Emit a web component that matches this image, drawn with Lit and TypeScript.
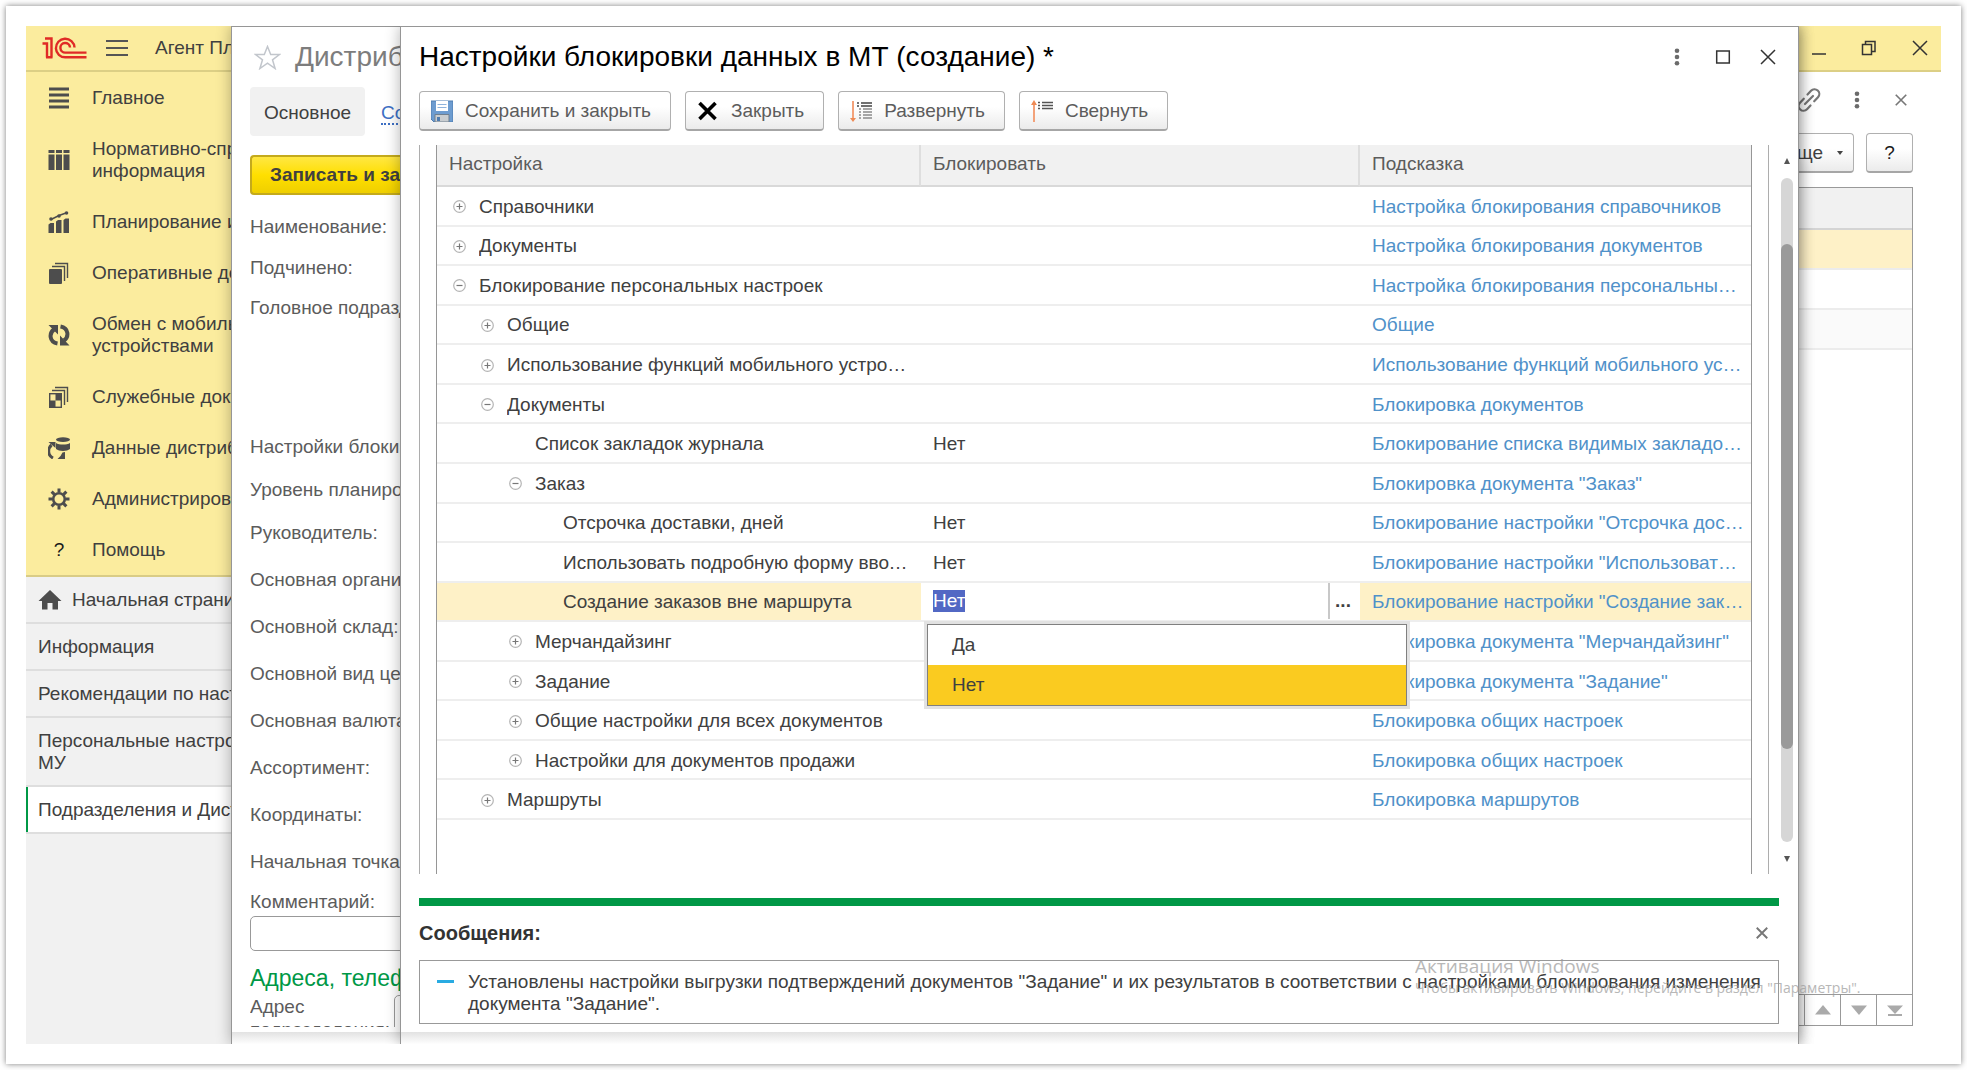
import { LitElement, html, css, svg, nothing } from "lit";
import { customElement, state, query } from "lit/decorators.js";
import { classMap } from "lit/directives/class-map.js";

const dark = "#4d4d4d";

const sectionIcons: Record<string, unknown> = {
  main: svg`<path d="M1 2h20M1 8h20M1 14h20M1 20h20" stroke=${dark} stroke-width="3"/>`,
  tables: svg`<path d="M0.5 1h6v3h-6zM8 1h6v3H8zM15.500 1h6v3h-6zM0.500 5.500h6V21h-6zM8 5.500h6V21H8zM15.500 5.500h6V21h-6z" fill=${dark}/>`,
  chart: svg`<path d="M0.500 13.500l2-1.500h3.500v10h-5.500zM8 10.500l2-1.500h3.500v13H8zM15.500 9l2-1.500H21v14.500h-5.500z" fill=${dark}/><path d="M3 8.500l8-4L18 2" stroke=${dark} stroke-width="1.500" fill="none"/><circle cx="3" cy="8" r="1.800" fill=${dark}/><circle cx="11" cy="5" r="1.800" fill=${dark}/><circle cx="18.500" cy="2" r="1.800" fill=${dark}/>`,
  docs: svg`<rect x="1" y="7" width="13" height="15" rx="1" fill=${dark}/><path d="M4 4.500h12.500V19M7 1.500h12.500V16" stroke=${dark} stroke-width="1.400" fill="none"/>`,
  sync: svg`<path d="M9.500 19.500C1 18 1 9 6 5.500M12.500 2.500C21 4 21 13 16 16.500" stroke=${dark} stroke-width="4" fill="none"/><path d="M0.500 1H10v9.500zM21.500 21.500H12V11.500z" fill=${dark}/>`,
  service: svg`<rect x="1.700" y="7.700" width="11.600" height="13.600" fill="none" stroke=${dark} stroke-width="1.400"/><path d="M7.500 7.500h6v7h-6zM1.500 14.500h6v7h-6z" fill=${dark}/><path d="M4 4.500h12.500V19M7 1.500h12.500V16" stroke=${dark} stroke-width="1.400" fill="none"/>`,
  data: svg`<ellipse cx="15" cy="2.600" rx="7" ry="2.400" fill=${dark}/><path d="M8 6c3 2 11 2 14 0V12c-3 2.500-11 2.500-14 0z" fill=${dark}/><path d="M5 21C-1 18 0 11 3.500 8" stroke=${dark} stroke-width="3" fill="none"/><path d="M0.500 5H7.500v6zM17 15v7h-7.500l3-3 2-3.500z" fill=${dark}/>`,
  gear: svg`<circle cx="11" cy="11" r="5.800" fill="none" stroke=${dark} stroke-width="2.600"/><path d="M11 0.500v4M11 17.500v4M0.500 11h4M17.500 11h4M3.600 3.600l2.800 2.800M15.600 15.600l2.800 2.800M18.400 3.600l-2.800 2.800M6.400 15.600l-2.800 2.800" stroke=${dark} stroke-width="3"/>`,
};

const sections: { icon: string; lines: string[] }[] = [
  { icon: "main", lines: ["Главное"] },
  { icon: "tables", lines: ["Нормативно-спр", "информация"] },
  { icon: "chart", lines: ["Планирование и"] },
  { icon: "docs", lines: ["Оперативные до"] },
  { icon: "sync", lines: ["Обмен с мобиль", "устройствами"] },
  { icon: "service", lines: ["Служебные доку"] },
  { icon: "data", lines: ["Данные дистриб"] },
  { icon: "gear", lines: ["Администрирова"] },
  { icon: "help", lines: ["Помощь"] },
];

const pages: { lines: string[]; home?: boolean; active?: boolean }[] = [
  { lines: ["Начальная страни"], home: true },
  { lines: ["Информация"] },
  { lines: ["Рекомендации по наст"] },
  { lines: ["Персональные настро", "МУ"] },
  { lines: ["Подразделения и Дист"], active: true },
];

interface Setting {
  name: string;
  level: number;
  open?: boolean;
  value?: string;
  hint: string;
  current?: boolean;
}

const settings: Setting[] = [
  { name: "Справочники", level: 0, open: false, hint: "Настройка блокирования справочников" },
  { name: "Документы", level: 0, open: false, hint: "Настройка блокирования документов" },
  { name: "Блокирование персональных настроек", level: 0, open: true, hint: "Настройка блокирования персональных настроек" },
  { name: "Общие", level: 1, open: false, hint: "Общие" },
  { name: "Использование функций мобильного устройства", level: 1, open: false, hint: "Использование функций мобильного устройства" },
  { name: "Документы", level: 1, open: true, hint: "Блокировка документов" },
  { name: "Список закладок журнала", level: 2, value: "Нет", hint: "Блокирование списка видимых закладок журнала" },
  { name: "Заказ", level: 2, open: true, hint: 'Блокировка документа "Заказ"' },
  { name: "Отсрочка доставки, дней", level: 3, value: "Нет", hint: 'Блокирование настройки "Отсрочка доставки, дней"' },
  { name: "Использовать подробную форму ввода заказа", level: 3, value: "Нет", hint: 'Блокирование настройки "Использовать подробную форму ввода заказа"' },
  { name: "Создание заказов вне маршрута", level: 3, value: "Нет", hint: 'Блокирование настройки "Создание заказов вне маршрута"', current: true },
  { name: "Мерчандайзинг", level: 2, open: false, hint: 'Блокировка документа "Мерчандайзинг"' },
  { name: "Задание", level: 2, open: false, hint: 'Блокировка документа "Задание"' },
  { name: "Общие настройки для всех документов", level: 2, open: false, hint: "Блокировка общих настроек" },
  { name: "Настройки для документов продажи", level: 2, open: false, hint: "Блокировка общих настроек" },
  { name: "Маршруты", level: 1, open: false, hint: "Блокировка маршрутов" },
];

const dots = html`<svg width="18" height="18" viewBox="0 0 18 18" aria-hidden="true"><g fill="#6b6b6b"><circle cx="9" cy="2.800" r="2.300"/><circle cx="9" cy="9" r="2.300"/><circle cx="9" cy="15.200" r="2.300"/></g></svg>`;
const cross = (size: number, width: number, color: string) => html`<svg width=${size} height=${size} viewBox="0 0 16 16" aria-hidden="true"><path d="M1 1l14 14M15 1L1 15" stroke=${color} stroke-width=${width} fill="none"/></svg>`;

const base = css`
  * { box-sizing: border-box; }
  button, input { font: inherit; color: inherit; margin: 0; padding: 0; }
  button { background: none; border: 0; display: flex; align-items: center; justify-content: center; cursor: pointer; white-space: nowrap; }
  svg { display: block; flex: none; }
  h1, h2, p, ul { margin: 0; padding: 0; font-weight: 400; list-style: none; }
  a { color: inherit; text-decoration: none; }
  .push { height: 40px; border: 1px solid #b0b0b0; border-bottom: 2px solid #a6a6a6; border-radius: 4px; background: linear-gradient(#ffffff 40%, #ebebeb); }
`;

@customElement("section-nav")
export class SectionNav extends LitElement {
  static styles = [base, css`
    :host { display: block; overflow: hidden; white-space: nowrap; background: #f1f1f1; }
    .sections { background: #fbec9e; border-bottom: 2px solid #d9cc86; }
    .section { display: grid; grid-template-columns: 22px 1fr; column-gap: 22px; align-items: center; padding: 15px 0 14px 22px; line-height: 22px; }
    .help { text-align: center; color: #1a1a1a; }
    .page { display: flex; align-items: center; gap: 10px; padding: 12px 0 11px 12px; border-bottom: 2px solid #dedede; line-height: 22px; }
    .page.active { background: #fff; box-shadow: inset 2px 0 #009846; }
  `];

  render() {
    return html`
      <ul class="sections">
        ${sections.map((s) => html`<li><a class="section" href="#">
          ${s.icon === "help"
            ? html`<span class="help">?</span>`
            : html`<svg width="22" height="22" viewBox="0 0 22 22" aria-hidden="true">${sectionIcons[s.icon]}</svg>`}
          <span>${s.lines.map((l, i) => html`${i ? html`<br>` : nothing}${l}`)}</span>
        </a></li>`)}
      </ul>
      <ul>
        ${pages.map((p) => html`<li><a class=${classMap({ page: true, active: !!p.active })} href="#">
          ${p.home ? html`<svg width="24" height="20" viewBox="0 0 24 20" aria-hidden="true"><path d="M12 0L0.500 11H4v8.500h5.500V13h5v6.500H20V11h3.500z" fill="#4d4d4d"/></svg>` : nothing}
          <span>${p.lines.map((l, i) => html`${i ? html`<br>` : nothing}${l}`)}</span>
        </a></li>`)}
      </ul>`;
  }
}

@customElement("list-page")
export class ListPage extends LitElement {
  static styles = [base, css`
    :host { display: flex; flex-direction: column; align-items: stretch; background: #fff; padding: 16px 28px 18px 28px; }
    .tools { display: flex; justify-content: flex-end; align-items: center; gap: 27px; height: 24px; padding-right: 4px; }
    .tools .close { width: 16px; }
    .commands { display: flex; justify-content: flex-end; gap: 12px; padding: 21px 0 14px; }
    .more { gap: 14px; padding: 0 10px 0 24px; }
    .query { width: 47px; color: #1a1a1a; }
    .grid { flex: 1; border: 1px solid #999; border-bottom: 0; }
    .head { height: 42px; background: #f1f1f1; border-bottom: 2px solid #d4d4d4; }
    .row { height: 40px; border-bottom: 2px solid #ececec; }
    .row.current { background: #fef1c7; }
    .row.alt { background: #fafafa; }
    .pager { display: flex; justify-content: flex-end; border: 1px solid #999; }
    .pager button { width: 36px; height: 30px; border-left: 1px solid #999; }
  `];

  render() {
    return html`
      <div class="tools">
        <button aria-label="Ссылка"><svg width="24" height="24" viewBox="0 0 24 24" fill="none" stroke="#777" stroke-width="2.200" stroke-linecap="round"><path d="M8 16l8-8"/><path d="M10.500 6.500l3.500-3.700a4.600 4.600 0 0 1 7 6.500l-3.800 4"/><path d="M13.500 17.500L10 21.200a4.600 4.600 0 0 1-7-6.500l3.800-4"/></svg></button>
        <button aria-label="Меню">${dots}</button>
        <button class="close" aria-label="Закрыть страницу">${cross(12, 2.2, "#777")}</button>
      </div>
      <div class="commands">
        <button class="push more">Еще <svg width="6" height="4" viewBox="0 0 6 4"><path d="M0 0h6L3 4z" fill="#444"/></svg></button>
        <button class="push query">?</button>
      </div>
      <div class="grid">
        <div class="head"></div>
        <div class="row current"></div>
        <div class="row"></div>
        <div class="row alt"></div>
      </div>
      <div class="pager">
        <button aria-label="Вверх"><svg width="16" height="10" viewBox="0 0 16 10"><path d="M0 9.500L8 0l8 9.500z" fill="#aaa"/></svg></button>
        <button aria-label="Вниз"><svg width="16" height="10" viewBox="0 0 16 10"><path d="M0 0.500L8 10l8-9.500z" fill="#aaa"/></svg></button>
        <button aria-label="В конец"><svg width="16" height="11" viewBox="0 0 16 11"><path d="M0 0.500L8 9l8-8.500zM1 9h14v2H1z" fill="#aaa"/></svg></button>
      </div>`;
  }
}

@customElement("division-form")
export class DivisionForm extends LitElement {
  static styles = [base, css`
    :host { display: flex; flex-direction: column; overflow: hidden; white-space: nowrap; color: #5c5c5c; padding: 13px 0 0 18px; line-height: 22px; }
    :host > *, .fields > * { flex: none; }
    .title { display: flex; align-items: center; gap: 14px; padding-left: 4px; height: 34px; }
    h1 { font-size: 28px; line-height: 34px; color: #7d7d7d; }
    .tabs { display: flex; gap: 16px; margin: 13px 0 19px; color: #404040; }
    .tab { height: 49px; line-height: 51px; padding: 0 14px; border-radius: 4px; }
    .tab.on { background: #f1f1f1; }
    .tab.link { padding: 0; color: #3d6fc4; }
    .tab.link span { border-bottom: 2px dotted #3d6fc4; }
    .save { align-self: stretch; justify-content: flex-start; height: 40px; padding-left: 18px; font-weight: 700; color: #404040; border: 2px solid #c4aa1c; border-right: 0; border-radius: 4px 0 0 4px; background: linear-gradient(#ffe743, #ffdf00 50%, #efcf00); }
    .fields { display: flex; flex-direction: column; margin-top: 10px; }
    .f40 { height: 40px; line-height: 40px; }
    .f43 { height: 43px; line-height: 44px; }
    .f47 { height: 47px; line-height: 44px; }
    .gap { margin-bottom: 97px; }
    .note { padding-top: 4px; line-height: 22px; }
    .text { display: block; width: 200px; height: 35px; margin-top: 3px; border: 1px solid #999; border-radius: 5px; background: #fff; outline: 0; }
    h2 { font-size: 23px; line-height: 26px; color: #009846; margin-top: 14px; }
    .address { display: flex; justify-content: flex-start; margin-top: 4px; height: 32px; overflow: hidden; }
    .address label { width: 144px; line-height: 23px; flex: none; }
    .address input { flex: none; width: 60px; height: 60px; border: 1px solid #999; border-radius: 5px; outline: 0; }
  `];

  render() {
    return html`
      <div class="title">
        <svg width="27" height="25" viewBox="0 0 27 25" aria-hidden="true"><path d="M13.500 1.500l3.200 8h8.800l-7 5.300 2.600 8.700-7.600-5.300-7.600 5.300 2.600-8.700-7-5.300h8.800z" fill="#fff" stroke="#c2c6cc" stroke-width="1.500"/></svg>
        <h1>Дистриб</h1>
      </div>
      <div class="tabs"><a class="tab on" href="#">Основное</a><a class="tab link" href="#"><span>Со</span></a></div>
      <button class="save">Записать и за</button>
      <div class="fields">
        <span class="f43">Наименование:</span>
        <span class="f40">Подчинено:</span>
        <span class="f40 gap">Головное подразд</span>
        <span class="f43">Настройки блокир</span>
        <span class="f43">Уровень планиро</span>
        <span class="f47">Руководитель:</span>
        <span class="f47">Основная органи</span>
        <span class="f47">Основной склад:</span>
        <span class="f47">Основной вид цен</span>
        <span class="f47">Основная валюта</span>
        <span class="f47">Ассортимент:</span>
        <span class="f47">Координаты:</span>
        <span class="f47">Начальная точка</span>
        <label class="note" for="comment">Комментарий:</label>
        <input class="text" id="comment" type="text">
      </div>
      <h2>Адреса, телеф</h2>
      <div class="address"><label for="address">Адрес<br>подразделения:</label><input id="address" type="text"></div>`;
  }
}

@customElement("lock-settings")
export class LockSettings extends LitElement {
  static styles = [base, css`
    :host { display: flex; flex-direction: column; padding: 7px 19px 8px 18px; color: #404040; }
    .title { display: flex; align-items: center; justify-content: space-between; height: 34px; margin-top: 6px; padding-right: 3px; }
    h1 { font-size: 28px; line-height: 34px; color: #000; }
    .controls { display: flex; align-items: center; gap: 29px; }
    .tools { display: flex; gap: 14px; margin-top: 17px; color: #5c5c5c; }
    .tools button { padding: 0 19px 0 11px; gap: 12px; }
    .body { flex: 1; display: flex; margin: 14px -14px 0 0; min-height: 728px; }
    .group { flex: 1; min-width: 0; border: solid #adadad; border-width: 0 1px; padding: 0 16px; display: flex; flex-direction: column; }
    .frame { flex: 1; border: solid #969696; border-width: 0 1px; }
    table { width: 100%; height: 675px; table-layout: fixed; border-collapse: separate; border-spacing: 0; }
    .c1 { width: 484px; }
    .c2 { width: 439px; }
    th { height: 42px; background: #f1f1f1; border-bottom: 2px solid #d9d9d9; border-right: 2px solid #dedede; text-align: left; font-weight: 400; padding: 0 0 2px 12px; color: #5c5c5c; }
    th:last-child { border-right: 0; }
    td { height: 39px; padding: 2px 8px 0 12px; border-bottom: 2px solid #eeeeee; line-height: 22px; white-space: nowrap; overflow: hidden; text-overflow: ellipsis; }
    .name { display: flex; align-items: center; gap: 13px; padding-left: 4px; }
    .name.l1 { padding-left: 32px; }
    .name.l2 { padding-left: 60px; }
    .name.l3 { padding-left: 88px; }
    .name .fold { width: 13px; height: 13px; flex: none; }
    .name span { overflow: hidden; text-overflow: ellipsis; }
    .hint { color: #5091c9; padding-right: 5px; }
    .current td { background: #fef1c7; }
    .current .edit { background: #fff; position: relative; overflow: visible; padding: 0; }
    .editor { display: flex; height: 36px; align-items: center; }
    .editor input { flex: 1; min-width: 0; height: 22px; padding-left: 12px; border: 0; outline: 0; background: none; }
    .editor input::selection { background: #5268c4; color: #fff; }
    .editor button { width: 32px; height: 36px; border-left: 2px solid #c8c8c8; padding-right: 4px; font-weight: 700; }
    .list { position: absolute; z-index: 2; top: 41px; left: 6px; width: 480px; background: #fff; border: 1px solid #808080; box-shadow: 0 0 0 3px #e2e2e2; }
    .list li { height: 40px; line-height: 40px; padding-left: 24px; }
    .list .picked { background: #facb20; }
    .scroll { width: 24px; display: flex; flex-direction: column; align-items: center; gap: 14px; padding: 13px 0 12px 12px; }
    .track { flex: 1; width: 12px; border-radius: 6px; background: #d6d6d6; padding-top: 66px; }
    .thumb { height: 505px; border-radius: 6px; background: #9a9a9a; }
    .bar { height: 8px; background: #009846; margin-top: 24px; }
    .caption { display: flex; justify-content: space-between; align-items: center; padding: 16px 11px 0 0; line-height: 22px; }
    .caption h2 { font-size: 20px; font-weight: 700; color: #333; }
    .message { display: flex; gap: 14px; border: 1px solid #999; margin-top: 16px; padding: 10px 8px 8px 17px; line-height: 22px; min-height: 63px; }
    .dash { flex: none; width: 17px; height: 3px; margin-top: 9px; background: #29abe2; }
  `];

  @state() private value = "Нет";
  @query(".editor input") private field!: HTMLInputElement;

  firstUpdated() {
    this.field.focus({ preventScroll: true });
    this.field.select();
  }

  private marker(open?: boolean) {
    if (open === undefined) return html`<i class="fold"></i>`;
    return html`<button class="fold" aria-label=${open ? "Свернуть" : "Развернуть"}><svg width="13" height="13" viewBox="0 0 13 13"><circle cx="6.500" cy="6.500" r="5.800" fill="#fff" stroke="#b5b5b5" stroke-width="1.200"/><path d=${open ? "M3.500 6.500h6" : "M3.500 6.500h6M6.500 3.500v6"} stroke="#777" stroke-width="1.200"/></svg></button>`;
  }

  private editor() {
    return html`<td class="edit">
      <div class="editor">
        <input type="text" aria-label="Блокировать" .value=${this.value}>
        <button aria-label="Выбрать">...</button>
      </div>
      <ul class="list" role="listbox">
        ${["Да", "Нет"].map((v) => html`<li role="option" aria-selected=${v === this.value} class=${classMap({ picked: v === this.value })} @click=${() => (this.value = v)}>${v}</li>`)}
      </ul>
    </td>`;
  }

  render() {
    return html`
      <div class="title">
        <h1>Настройки блокировки данных в МТ (создание) *</h1>
        <div class="controls">
          <button aria-label="Меню">${dots}</button>
          <button aria-label="Развернуть окно"><svg width="16" height="16" viewBox="0 0 16 16"><rect x="1.700" y="2" width="12.600" height="12" fill="none" stroke="#333" stroke-width="1.500"/></svg></button>
          <button aria-label="Закрыть окно">${cross(16, 1.5, "#333")}</button>
        </div>
      </div>
      <div class="tools">
        <button class="push"><svg width="22" height="22" viewBox="0 0 22 22"><path d="M0 1h22v21H3l-3-3z" fill="#6d9cd0"/><path d="M0 1h22v21H3l-3-3z" fill="none" stroke="#4f7cb0"/><path d="M5 1h12v10H5z" fill="#fff"/><path d="M6.500 4.500h9M6.500 7.500h9" stroke="#8fb3dc" stroke-width="1.200"/><path d="M4 14.500h14V22H4z" fill="#c9cdd0" stroke="#6f7f8f"/><path d="M6 17h3v4H6z" fill="#4f7cb0"/></svg>Сохранить и закрыть</button>
        <button class="push"><svg width="22" height="22" viewBox="0 0 22 22"><path d="M2.500 3l16 16M18.500 3l-16 16" stroke="#000" stroke-width="3.600"/></svg>Закрыть</button>
        <button class="push"><svg width="22" height="22" viewBox="0 0 22 22"><path d="M3 1v18" stroke="#f3a27a" stroke-width="2"/><path d="M0 18h6l-3 4z" fill="#ee8a55"/><path d="M7 3h2M11 3h11M7 6h2M11 6h11" stroke="#444" stroke-width="1.600"/><path d="M9 9h2M13 9h9M9 12h2M13 12h9M9 15h2M13 15h9M9 18h2M13 18h9" stroke="#8a8a8a" stroke-width="1.400"/></svg>Развернуть</button>
        <button class="push"><svg width="22" height="22" viewBox="0 0 22 22"><path d="M3 4v18" stroke="#f3a27a" stroke-width="2"/><path d="M0 5h6L3 0z" fill="#ee8a55"/><path d="M7 2.500h2M11 2.500h11M7 5.500h2M11 5.500h11M7 8.500h2M11 8.500h11" stroke="#555" stroke-width="1.600"/></svg>Свернуть</button>
      </div>
      <div class="body">
        <div class="group"><div class="frame">
          <table>
            <thead><tr><th class="c1">Настройка</th><th class="c2">Блокировать</th><th>Подсказка</th></tr></thead>
            <tbody>
              ${settings.map((s) => html`<tr class=${classMap({ current: !!s.current })}>
                <td><div class="name l${s.level}">${this.marker(s.open)}<span>${s.name}</span></div></td>
                ${s.current ? this.editor() : html`<td>${s.value ?? ""}</td>`}
                <td class="hint">${s.hint}</td>
              </tr>`)}
            </tbody>
          </table>
        </div></div>
        <div class="scroll">
          <svg width="6" height="6" viewBox="0 0 6 6"><path d="M0 6h6L3 0z" fill="#555"/></svg>
          <div class="track"><div class="thumb"></div></div>
          <svg width="6" height="6" viewBox="0 0 6 6"><path d="M0 0h6L3 6z" fill="#555"/></svg>
        </div>
      </div>
      <div class="bar"></div>
      <div class="caption"><h2>Сообщения:</h2><button aria-label="Закрыть сообщения">${cross(12, 2.5, "#777")}</button></div>
      <div class="message"><span class="dash"></span><p>Установлены настройки выгрузки подтверждений документов "Задание" и их результатов в соответствии с настройками блокирования изменения документа "Задание".</p></div>`;
  }
}

@customElement("app-root")
export class AppRoot extends LitElement {
  static styles = [base, css`
    :host { display: flex; min-height: 100vh; padding: 6px; background: #fff; font-family: "Liberation Sans", Arial, sans-serif; font-size: 19px; color: #404040; box-sizing: border-box; }
    .card { flex: 1; min-width: 0; display: flex; padding: 20px; background: #fff; box-shadow: 0 0 6px rgba(0, 0, 0, 0.5); }
    .desktop { position: relative; flex: 1; min-width: 0; display: flex; flex-direction: column; overflow: hidden; }
    .appbar { display: flex; align-items: center; height: 46px; padding: 0 13px 0 16px; background: #fbec9e; border-bottom: 2px solid #dccf85; white-space: nowrap; }
    .burger { margin: 0 27px 0 19px; }
    .controls { display: flex; align-items: center; gap: 35px; margin-left: auto; }
    .workspace { flex: 1; display: flex; }
    section-nav { width: 205px; flex: none; }
    list-page { flex: 1; min-width: 0; }
    .window { position: absolute; top: 0; bottom: 0; right: 142px; display: flex; flex-direction: column; background: #fff; border: 1px solid #969696; border-bottom: 0; box-shadow: 0 0 14px rgba(0, 0, 0, 0.3); }
    .window.form { left: 205px; }
    .window.dialog { left: 374px; }
    .window lock-settings { flex: 1; }
    .window division-form { flex: 1; min-height: 0; width: 169px; }
    .edge { height: 12px; flex: none; background: linear-gradient(#e2e2e2, #fefefe); }
    .notice { position: absolute; left: 1389px; bottom: 46px; font-family: "Open Sans", "Noto Sans", sans-serif; color: #9a9a9a; opacity: 0.7; white-space: nowrap; pointer-events: none; }
    .notice .big { font-size: 19px; line-height: 24px; }
    .notice .small { font-size: 14px; line-height: 20px; }
  `];

  render() {
    return html`
      <div class="card"><div class="desktop">
        <header class="appbar">
          <svg width="45" height="22" viewBox="0 0 45 22" fill="none" stroke="#e02a26" stroke-width="2.400" aria-label="1С"><path d="M3 1.500H9.500V20.500M0.500 6.500H5V20.500M4 20.300h6.500"/><path d="M32.500 10.500A9.300 9.300 0 1 0 23.500 20.300H44.500"/><path d="M28 10.500A4.800 4.800 0 1 0 23.500 15.600H44.500"/></svg>
          <button class="burger" aria-label="Меню"><svg width="22" height="18" viewBox="0 0 22 18"><path d="M0 2h22M0 9h22M0 16h22" stroke="#555" stroke-width="1.800"/></svg></button>
          <span>Агент Пл</span>
          <div class="controls">
            <button aria-label="Свернуть приложение"><svg width="14" height="16" viewBox="0 0 14 16"><path d="M0 14h14" stroke="#333" stroke-width="1.500"/></svg></button>
            <button aria-label="Восстановить"><svg width="16" height="16" viewBox="0 0 16 16" fill="none" stroke="#333" stroke-width="1.500"><rect x="1.500" y="4.500" width="9" height="10"/><path d="M4.500 4V1.500h9.500v10H11"/></svg></button>
            <button aria-label="Закрыть приложение">${cross(16, 1.5, "#333")}</button>
          </div>
        </header>
        <div class="workspace">
          <section-nav></section-nav>
          <list-page></list-page>
        </div>
        <div class="window form"><division-form></division-form><div class="edge"></div></div>
        <div class="window dialog"><lock-settings></lock-settings><div class="edge"></div></div>
        <div class="notice"><div class="big">Активация Windows</div><div class="small">Чтобы активировать Windows, перейдите в раздел "Параметры".</div></div>
      </div></div>`;
  }
}
